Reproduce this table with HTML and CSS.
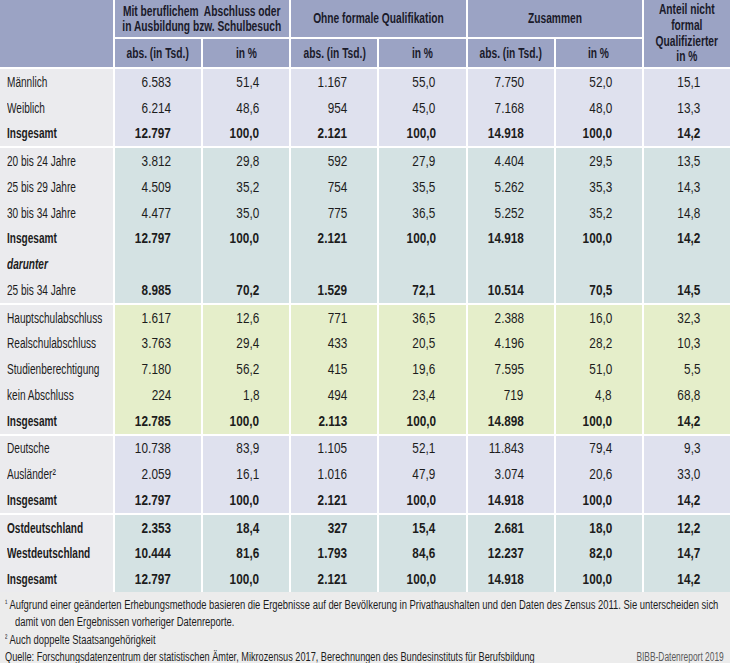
FILE: index.html
```html
<!DOCTYPE html>
<html lang="de">
<head>
<meta charset="utf-8">
<title>Tabelle</title>
<link rel="stylesheet" href="styles.css">
</head>
<body>
<div class="page">
  <div class="head">
    <div class="h h-blank"></div>
    <div class="h h-group"><span class="t">Mit beruflichem&nbsp; Abschluss oder<br>in Ausbildung bzw. Schulbesuch</span></div>
    <div class="h h-group"><span class="t">Ohne formale Qualifikation</span></div>
    <div class="h h-group"><span class="t">Zusammen</span></div>
    <div class="h h-last"><span class="t">Anteil nicht<br>formal<br>Qualifizierter<br>in %</span></div>
    <div class="h"><span class="t">abs. (in Tsd.)</span></div>
    <div class="h"><span class="t">in %</span></div>
    <div class="h"><span class="t">abs. (in Tsd.)</span></div>
    <div class="h"><span class="t">in %</span></div>
    <div class="h"><span class="t">abs. (in Tsd.)</span></div>
    <div class="h"><span class="t">in %</span></div>
  </div>

  <div class="grp g-lav">
    <div class="l"><span class="t">Männlich</span></div><div class="n"><span class="t">6.583</span></div><div class="n"><span class="t">51,4</span></div><div class="n"><span class="t">1.167</span></div><div class="n"><span class="t">55,0</span></div><div class="n"><span class="t">7.750</span></div><div class="n"><span class="t">52,0</span></div><div class="n"><span class="t">15,1</span></div>
    <div class="l"><span class="t">Weiblich</span></div><div class="n"><span class="t">6.214</span></div><div class="n"><span class="t">48,6</span></div><div class="n"><span class="t">954</span></div><div class="n"><span class="t">45,0</span></div><div class="n"><span class="t">7.168</span></div><div class="n"><span class="t">48,0</span></div><div class="n"><span class="t">13,3</span></div>
    <div class="l b"><span class="t">Insgesamt</span></div><div class="n b"><span class="t">12.797</span></div><div class="n b"><span class="t">100,0</span></div><div class="n b"><span class="t">2.121</span></div><div class="n b"><span class="t">100,0</span></div><div class="n b"><span class="t">14.918</span></div><div class="n b"><span class="t">100,0</span></div><div class="n b"><span class="t">14,2</span></div>
  </div>

  <div class="grp g-teal">
    <div class="l"><span class="t">20 bis 24 Jahre</span></div><div class="n"><span class="t">3.812</span></div><div class="n"><span class="t">29,8</span></div><div class="n"><span class="t">592</span></div><div class="n"><span class="t">27,9</span></div><div class="n"><span class="t">4.404</span></div><div class="n"><span class="t">29,5</span></div><div class="n"><span class="t">13,5</span></div>
    <div class="l"><span class="t">25 bis 29 Jahre</span></div><div class="n"><span class="t">4.509</span></div><div class="n"><span class="t">35,2</span></div><div class="n"><span class="t">754</span></div><div class="n"><span class="t">35,5</span></div><div class="n"><span class="t">5.262</span></div><div class="n"><span class="t">35,3</span></div><div class="n"><span class="t">14,3</span></div>
    <div class="l"><span class="t">30 bis 34 Jahre</span></div><div class="n"><span class="t">4.477</span></div><div class="n"><span class="t">35,0</span></div><div class="n"><span class="t">775</span></div><div class="n"><span class="t">36,5</span></div><div class="n"><span class="t">5.252</span></div><div class="n"><span class="t">35,2</span></div><div class="n"><span class="t">14,8</span></div>
    <div class="l b"><span class="t">Insgesamt</span></div><div class="n b"><span class="t">12.797</span></div><div class="n b"><span class="t">100,0</span></div><div class="n b"><span class="t">2.121</span></div><div class="n b"><span class="t">100,0</span></div><div class="n b"><span class="t">14.918</span></div><div class="n b"><span class="t">100,0</span></div><div class="n b"><span class="t">14,2</span></div>
    <div class="l b i"><span class="t">darunter</span></div><div class="n"></div><div class="n"></div><div class="n"></div><div class="n"></div><div class="n"></div><div class="n"></div><div class="n"></div>
    <div class="l"><span class="t">25 bis 34 Jahre</span></div><div class="n b"><span class="t">8.985</span></div><div class="n b"><span class="t">70,2</span></div><div class="n b"><span class="t">1.529</span></div><div class="n b"><span class="t">72,1</span></div><div class="n b"><span class="t">10.514</span></div><div class="n b"><span class="t">70,5</span></div><div class="n b"><span class="t">14,5</span></div>
  </div>

  <div class="grp g-green">
    <div class="l"><span class="t">Hauptschulabschluss</span></div><div class="n"><span class="t">1.617</span></div><div class="n"><span class="t">12,6</span></div><div class="n"><span class="t">771</span></div><div class="n"><span class="t">36,5</span></div><div class="n"><span class="t">2.388</span></div><div class="n"><span class="t">16,0</span></div><div class="n"><span class="t">32,3</span></div>
    <div class="l"><span class="t">Realschulabschluss</span></div><div class="n"><span class="t">3.763</span></div><div class="n"><span class="t">29,4</span></div><div class="n"><span class="t">433</span></div><div class="n"><span class="t">20,5</span></div><div class="n"><span class="t">4.196</span></div><div class="n"><span class="t">28,2</span></div><div class="n"><span class="t">10,3</span></div>
    <div class="l"><span class="t">Studienberechtigung</span></div><div class="n"><span class="t">7.180</span></div><div class="n"><span class="t">56,2</span></div><div class="n"><span class="t">415</span></div><div class="n"><span class="t">19,6</span></div><div class="n"><span class="t">7.595</span></div><div class="n"><span class="t">51,0</span></div><div class="n"><span class="t">5,5</span></div>
    <div class="l"><span class="t">kein Abschluss</span></div><div class="n"><span class="t">224</span></div><div class="n"><span class="t">1,8</span></div><div class="n"><span class="t">494</span></div><div class="n"><span class="t">23,4</span></div><div class="n"><span class="t">719</span></div><div class="n"><span class="t">4,8</span></div><div class="n"><span class="t">68,8</span></div>
    <div class="l b"><span class="t">Insgesamt</span></div><div class="n b"><span class="t">12.785</span></div><div class="n b"><span class="t">100,0</span></div><div class="n b"><span class="t">2.113</span></div><div class="n b"><span class="t">100,0</span></div><div class="n b"><span class="t">14.898</span></div><div class="n b"><span class="t">100,0</span></div><div class="n b"><span class="t">14,2</span></div>
  </div>

  <div class="grp g-lav">
    <div class="l"><span class="t">Deutsche</span></div><div class="n"><span class="t">10.738</span></div><div class="n"><span class="t">83,9</span></div><div class="n"><span class="t">1.105</span></div><div class="n"><span class="t">52,1</span></div><div class="n"><span class="t">11.843</span></div><div class="n"><span class="t">79,4</span></div><div class="n"><span class="t">9,3</span></div>
    <div class="l"><span class="t">Ausländer²</span></div><div class="n"><span class="t">2.059</span></div><div class="n"><span class="t">16,1</span></div><div class="n"><span class="t">1.016</span></div><div class="n"><span class="t">47,9</span></div><div class="n"><span class="t">3.074</span></div><div class="n"><span class="t">20,6</span></div><div class="n"><span class="t">33,0</span></div>
    <div class="l b"><span class="t">Insgesamt</span></div><div class="n b"><span class="t">12.797</span></div><div class="n b"><span class="t">100,0</span></div><div class="n b"><span class="t">2.121</span></div><div class="n b"><span class="t">100,0</span></div><div class="n b"><span class="t">14.918</span></div><div class="n b"><span class="t">100,0</span></div><div class="n b"><span class="t">14,2</span></div>
  </div>

  <div class="grp g-teal">
    <div class="l b"><span class="t">Ostdeutschland</span></div><div class="n b"><span class="t">2.353</span></div><div class="n b"><span class="t">18,4</span></div><div class="n b"><span class="t">327</span></div><div class="n b"><span class="t">15,4</span></div><div class="n b"><span class="t">2.681</span></div><div class="n b"><span class="t">18,0</span></div><div class="n b"><span class="t">12,2</span></div>
    <div class="l b"><span class="t">Westdeutschland</span></div><div class="n b"><span class="t">10.444</span></div><div class="n b"><span class="t">81,6</span></div><div class="n b"><span class="t">1.793</span></div><div class="n b"><span class="t">84,6</span></div><div class="n b"><span class="t">12.237</span></div><div class="n b"><span class="t">82,0</span></div><div class="n b"><span class="t">14,7</span></div>
    <div class="l b"><span class="t">Insgesamt</span></div><div class="n b"><span class="t">12.797</span></div><div class="n b"><span class="t">100,0</span></div><div class="n b"><span class="t">2.121</span></div><div class="n b"><span class="t">100,0</span></div><div class="n b"><span class="t">14.918</span></div><div class="n b"><span class="t">100,0</span></div><div class="n b"><span class="t">14,2</span></div>
  </div>

  <div class="foot">
    <p class="fn"><span class="t"><span class="sup">¹</span> Aufgrund einer geänderten Erhebungsmethode basieren die Ergebnisse auf der Bevölkerung in Privathaushalten und den Daten des Zensus 2011. Sie unterscheiden sich</span></p>
    <p class="fn indent"><span class="t">damit von den Ergebnissen vorheriger Datenreporte.</span></p>
    <p class="fn fn-last"><span class="t"><span class="sup">²</span> Auch doppelte Staatsangehörigkeit</span></p>
    <div class="src">
      <span class="t src-text">Quelle: Forschungsdatenzentrum der statistischen Ämter, Mikrozensus 2017, Berechnungen des Bundesinstituts für Berufsbildung</span>
      <span class="t brand">BIBB-Datenreport 2019</span>
    </div>
  </div>
</div>
</body>
</html>
```

FILE: styles.css
```css
html, body {
  margin: 0;
  padding: 0;
  background: #ffffff;
}

body {
  font-family: "Liberation Sans", Arial, sans-serif;
  color: #1c1c1c;
  font-size: 14px;
}

.t {
  display: inline-block;
  white-space: nowrap;
}

.page {
  width: 730px;
  display: flex;
  flex-direction: column;
  gap: 2px;
  overflow: hidden;
}

.head {
  display: grid;
  grid-template-columns: 113px repeat(7, 1fr);
  grid-template-rows: 37px 28px;
  gap: 2px;
}

.h {
  background: #9ba3c4;
  color: #1a1a2a;
  font-weight: bold;
  display: flex;
  align-items: center;
  justify-content: center;
  text-align: center;
  line-height: 15px;
  overflow: hidden;
}

.h .t {
  transform: scaleX(0.73);
  transform-origin: center center;
}

.h-blank {
  grid-row: span 2;
}

.h-group {
  grid-column: span 2;
}

.h-last {
  grid-row: span 2;
  line-height: 15.7px;
}

.grp {
  display: grid;
  grid-template-columns: 113px repeat(7, 1fr);
  grid-auto-rows: 25.75px;
  column-gap: 2px;
}

.l {
  background: #ebebee;
  padding-left: 7px;
  display: flex;
  align-items: center;
  overflow: hidden;
}

.l .t {
  transform: scaleX(0.72);
  transform-origin: left center;
}

.n {
  display: flex;
  align-items: center;
  justify-content: flex-end;
  padding-right: 30px;
}

.n .t {
  transform: scaleX(0.84);
  transform-origin: right center;
}

.g-lav .n { background: #dfe1ee; }
.g-teal .n { background: #d4e2e3; }
.g-green .n { background: #e5eeca; }

.b { font-weight: bold; }
.i { font-style: italic; }

.foot {
  background: #ececec;
  margin-top: -2px;
  padding: 3px 0 0 5px;
  font-size: 12px;
  overflow: hidden;
}

.fn {
  margin: 0;
  line-height: 16.5px;
  white-space: nowrap;
}

.fn-last {
  line-height: 17px;
}

.fn .t {
  transform: scaleX(0.785);
  transform-origin: left center;
}

.indent {
  padding-left: 10px;
}

.sup {
  font-size: 9px;
  vertical-align: 3px;
}

.src {
  display: flex;
  padding-right: 6px;
  line-height: 17px;
}

.src-text {
  flex: 1 1 0;
  min-width: 0;
  transform: scaleX(0.765);
  transform-origin: left center;
}

.brand {
  flex: 0 0 auto;
  color: #5a5a5a;
  transform: scaleX(0.7);
  transform-origin: right center;
}
```
